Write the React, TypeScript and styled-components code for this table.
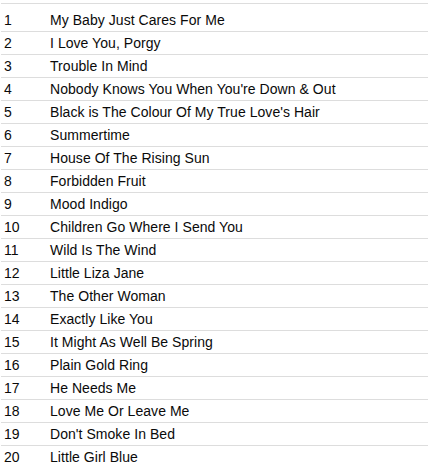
import React from "react";
import styled, { createGlobalStyle } from "styled-components";

const GlobalStyle = createGlobalStyle`
  html, body {
    margin: 0;
    padding: 0;
    background: #ffffff;
  }
  body {
    font-family: "Liberation Sans", Arial, Helvetica, sans-serif;
    color: #0a0a0a;
  }
`;

const TrackList = styled.div`
  padding-top: 3px;
  margin-left: 1px;
  width: 427px;
`;

const TopRule = styled.div`
  border-top: 1px solid #dddddd;
  margin-bottom: 4px;
`;

const Rows = styled.div``;

const Row = styled.div`
  box-sizing: border-box;
  height: 23px;
  display: grid;
  grid-template-columns: 46px 1fr;
  padding-left: 3px;
  border-top: 1px solid #dddddd;
  font-size: 14px;
  line-height: 22px;

  &:first-of-type {
    border-top-color: transparent;
  }
`;

const Num = styled.span`
  white-space: nowrap;
`;

const Title = styled.span`
  white-space: nowrap;
  letter-spacing: 0.05px;
`;

const tracks = [
  "My Baby Just Cares For Me",
  "I Love You, Porgy",
  "Trouble In Mind",
  "Nobody Knows You When You're Down & Out",
  "Black is The Colour Of My True Love's Hair",
  "Summertime",
  "House Of The Rising Sun",
  "Forbidden Fruit",
  "Mood Indigo",
  "Children Go Where I Send You",
  "Wild Is The Wind",
  "Little Liza Jane",
  "The Other Woman",
  "Exactly Like You",
  "It Might As Well Be Spring",
  "Plain Gold Ring",
  "He Needs Me",
  "Love Me Or Leave Me",
  "Don't Smoke In Bed",
  "Little Girl Blue",
];

export default function App() {
  return (
    <>
      <GlobalStyle />
      <TrackList>
        <TopRule />
        <Rows>
          {tracks.map((t, i) => (
            <Row key={i}>
              <Num>{i + 1}</Num>
              <Title>{t}</Title>
            </Row>
          ))}
        </Rows>
      </TrackList>
    </>
  );
}
